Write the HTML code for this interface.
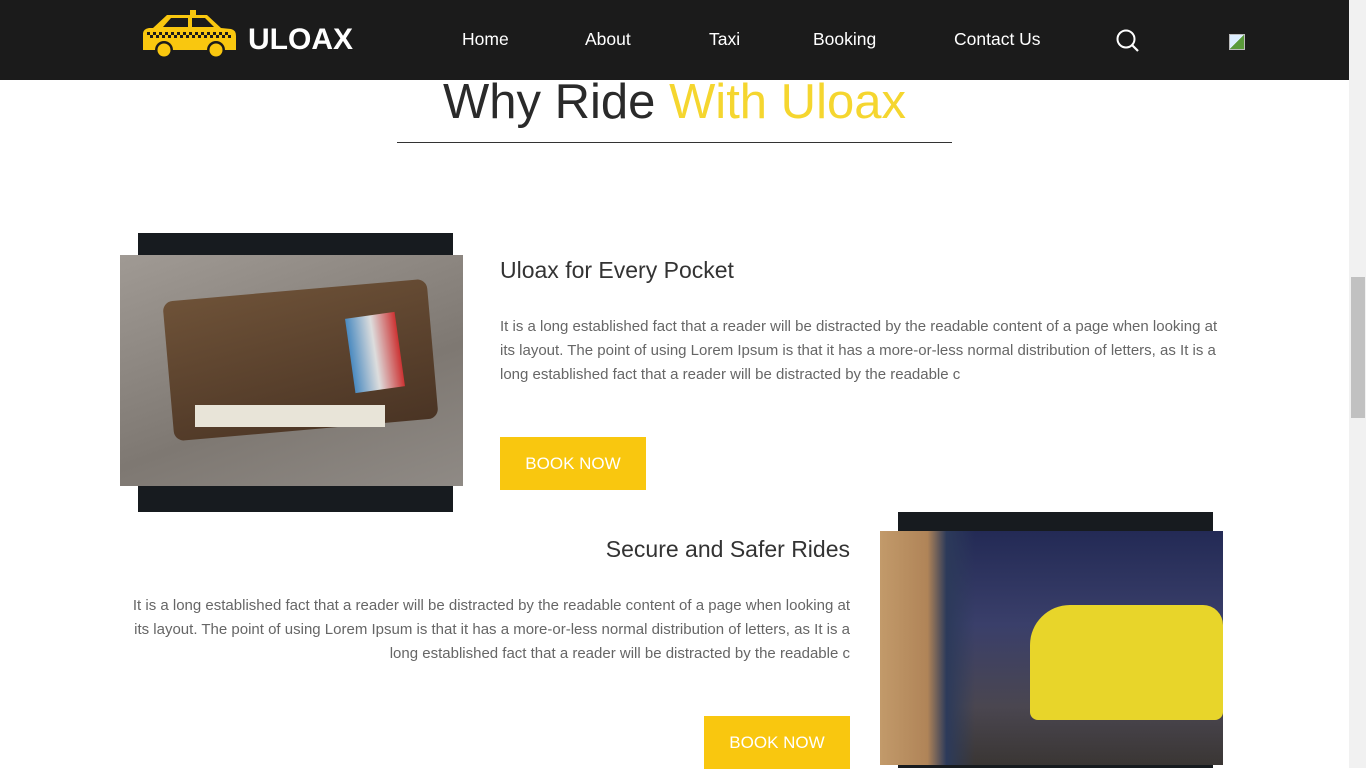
<!DOCTYPE html>
<html><head><meta charset="utf-8"><style>
*{margin:0;padding:0;box-sizing:border-box}
body{width:1366px;height:768px;overflow:hidden;background:#fff;font-family:"Liberation Sans",sans-serif;position:relative}
.hdr{position:absolute;left:0;top:0;width:1349px;height:80px;background:#1b1b1b}
.nav a{position:absolute;top:29px;color:#fff;font-size:17.5px;text-decoration:none}
.sb{position:absolute;right:0;top:0;width:17px;height:768px;background:#f1f1f1}
.thumb{position:absolute;left:1351px;top:277px;width:14px;height:141px;background:#c1c1c1}
.abs{position:absolute}
p.t{font-size:15px;line-height:24px;color:#666;font-weight:300}
.btn{position:absolute;background:#f9c70f;color:#fff;font-size:17px;text-align:center;line-height:53px}
</style></head><body>
<div class="hdr">
<svg class="abs" style="left:141px;top:10px" width="96" height="48" viewBox="0 0 96 48">
<rect x="49" y="0" width="6" height="5" fill="#f9c70f"/>
<path d="M12 18 L26 5 L66 5 L80 18 L90 19 Q95 20 95 26 L95 40 L2 40 L2 24 Q2 19 8 18Z" fill="#f9c70f"/>
<path d="M22 17 L30 8 L47 8 L47 17Z M51 8 L64 8 L73 17 L51 17Z" fill="#1b1b1b"/>
<g fill="#1b1b1b"><rect x="6" y="22" width="3" height="3"/><rect x="12" y="22" width="3" height="3"/><rect x="18" y="22" width="3" height="3"/><rect x="24" y="22" width="3" height="3"/><rect x="30" y="22" width="3" height="3"/><rect x="36" y="22" width="3" height="3"/><rect x="42" y="22" width="3" height="3"/><rect x="48" y="22" width="3" height="3"/><rect x="54" y="22" width="3" height="3"/><rect x="60" y="22" width="3" height="3"/><rect x="66" y="22" width="3" height="3"/><rect x="72" y="22" width="3" height="3"/><rect x="78" y="22" width="3" height="3"/><rect x="84" y="22" width="3" height="3"/>
<rect x="9" y="25" width="3" height="3"/><rect x="15" y="25" width="3" height="3"/><rect x="21" y="25" width="3" height="3"/><rect x="27" y="25" width="3" height="3"/><rect x="33" y="25" width="3" height="3"/><rect x="39" y="25" width="3" height="3"/><rect x="45" y="25" width="3" height="3"/><rect x="51" y="25" width="3" height="3"/><rect x="57" y="25" width="3" height="3"/><rect x="63" y="25" width="3" height="3"/><rect x="69" y="25" width="3" height="3"/><rect x="75" y="25" width="3" height="3"/><rect x="81" y="25" width="3" height="3"/><rect x="87" y="25" width="3" height="3"/>
<circle cx="23" cy="40" r="9"/><circle cx="75" cy="40" r="9"/></g>
<circle cx="23" cy="40" r="6.5" fill="#f9c70f"/><circle cx="75" cy="40" r="6.5" fill="#f9c70f"/>
</svg>
<div class="abs" style="left:248px;top:23px;color:#fff;font-weight:bold;font-size:30px">ULOAX</div>
<div class="nav"><a style="left:462px">Home</a><a style="left:585px">About</a><a style="left:709px">Taxi</a><a style="left:813px">Booking</a><a style="left:954px">Contact Us</a></div>
<svg class="abs" style="left:1115px;top:28px" width="26" height="26" viewBox="0 0 26 26"><circle cx="11" cy="11" r="8.5" fill="none" stroke="#fff" stroke-width="2"/><path d="M17 17 L23 23" stroke="#fff" stroke-width="2.2"/></svg>
<div class="abs" style="left:1229px;top:34px;width:16px;height:16px;background:linear-gradient(135deg,#ddeeff 50%,#5a9a3a 50%);border:1px solid #bbb"></div>
</div>
<div class="abs" style="left:0;top:74px;width:1349px;text-align:center;font-size:49px;color:#2a2a2a;font-weight:300">Why Ride <span style="color:#f5d62f">With Uloax</span></div>
<div class="abs" style="left:397px;top:142px;width:555px;height:1px;background:#333"></div>

<div class="abs" style="left:138px;top:233px;width:315px;height:279px;background:#171b1f"></div>
<div class="abs" style="left:120px;top:255px;width:343px;height:231px;background:linear-gradient(160deg,#a09a94,#7e7872 60%,#8f8a85)"></div>
<div class="abs" style="left:168px;top:290px;width:265px;height:140px;background:linear-gradient(170deg,#6e5238,#4a3424);border-radius:10px;transform:rotate(-5deg)"></div>
<div class="abs" style="left:195px;top:405px;width:190px;height:22px;background:#e8e4d8"></div>
<div class="abs" style="left:350px;top:315px;width:50px;height:75px;background:linear-gradient(90deg,#4a8ac0,#ddd,#c33);transform:rotate(-8deg)"></div>

<div class="abs" style="left:500px;top:257px;font-size:23px;color:#333;font-weight:300">Uloax for Every Pocket</div>
<p class="t abs" style="left:500px;top:315px;width:730px">It is a long established fact that a reader will be distracted by the readable content of a page when looking at its layout. The point of using Lorem Ipsum is that it has a more-or-less normal distribution of letters, as It is a long established fact that a reader will be distracted by the readable c</p>
<div class="btn" style="left:500px;top:437px;width:146px">BOOK NOW</div>

<div class="abs" style="left:898px;top:512px;width:315px;height:256px;background:#171b1f"></div>
<div class="abs" style="left:880px;top:531px;width:343px;height:234px;background:linear-gradient(180deg,#232a55,#3a3f6a 40%,#4a4650 75%,#3a3634)"></div>
<div class="abs" style="left:1030px;top:605px;width:193px;height:115px;background:#e8d52a;border-radius:40px 20px 8px 8px"></div>
<div class="abs" style="left:880px;top:531px;width:95px;height:234px;background:linear-gradient(90deg,#c29a6a,#b08458 50%,#2c3a5a 70%,transparent)"></div>

<div class="abs" style="left:0;top:536px;width:850px;text-align:right;font-size:23px;color:#333;font-weight:300">Secure and Safer Rides</div>
<p class="t abs" style="left:120px;top:594px;width:730px;text-align:right">It is a long established fact that a reader will be distracted by the readable content of a page when looking at its layout. The point of using Lorem Ipsum is that it has a more-or-less normal distribution of letters, as It is a long established fact that a reader will be distracted by the readable c</p>
<div class="btn" style="left:704px;top:716px;width:146px">BOOK NOW</div>
<div class="sb"></div><div class="thumb"></div>
</body></html>
